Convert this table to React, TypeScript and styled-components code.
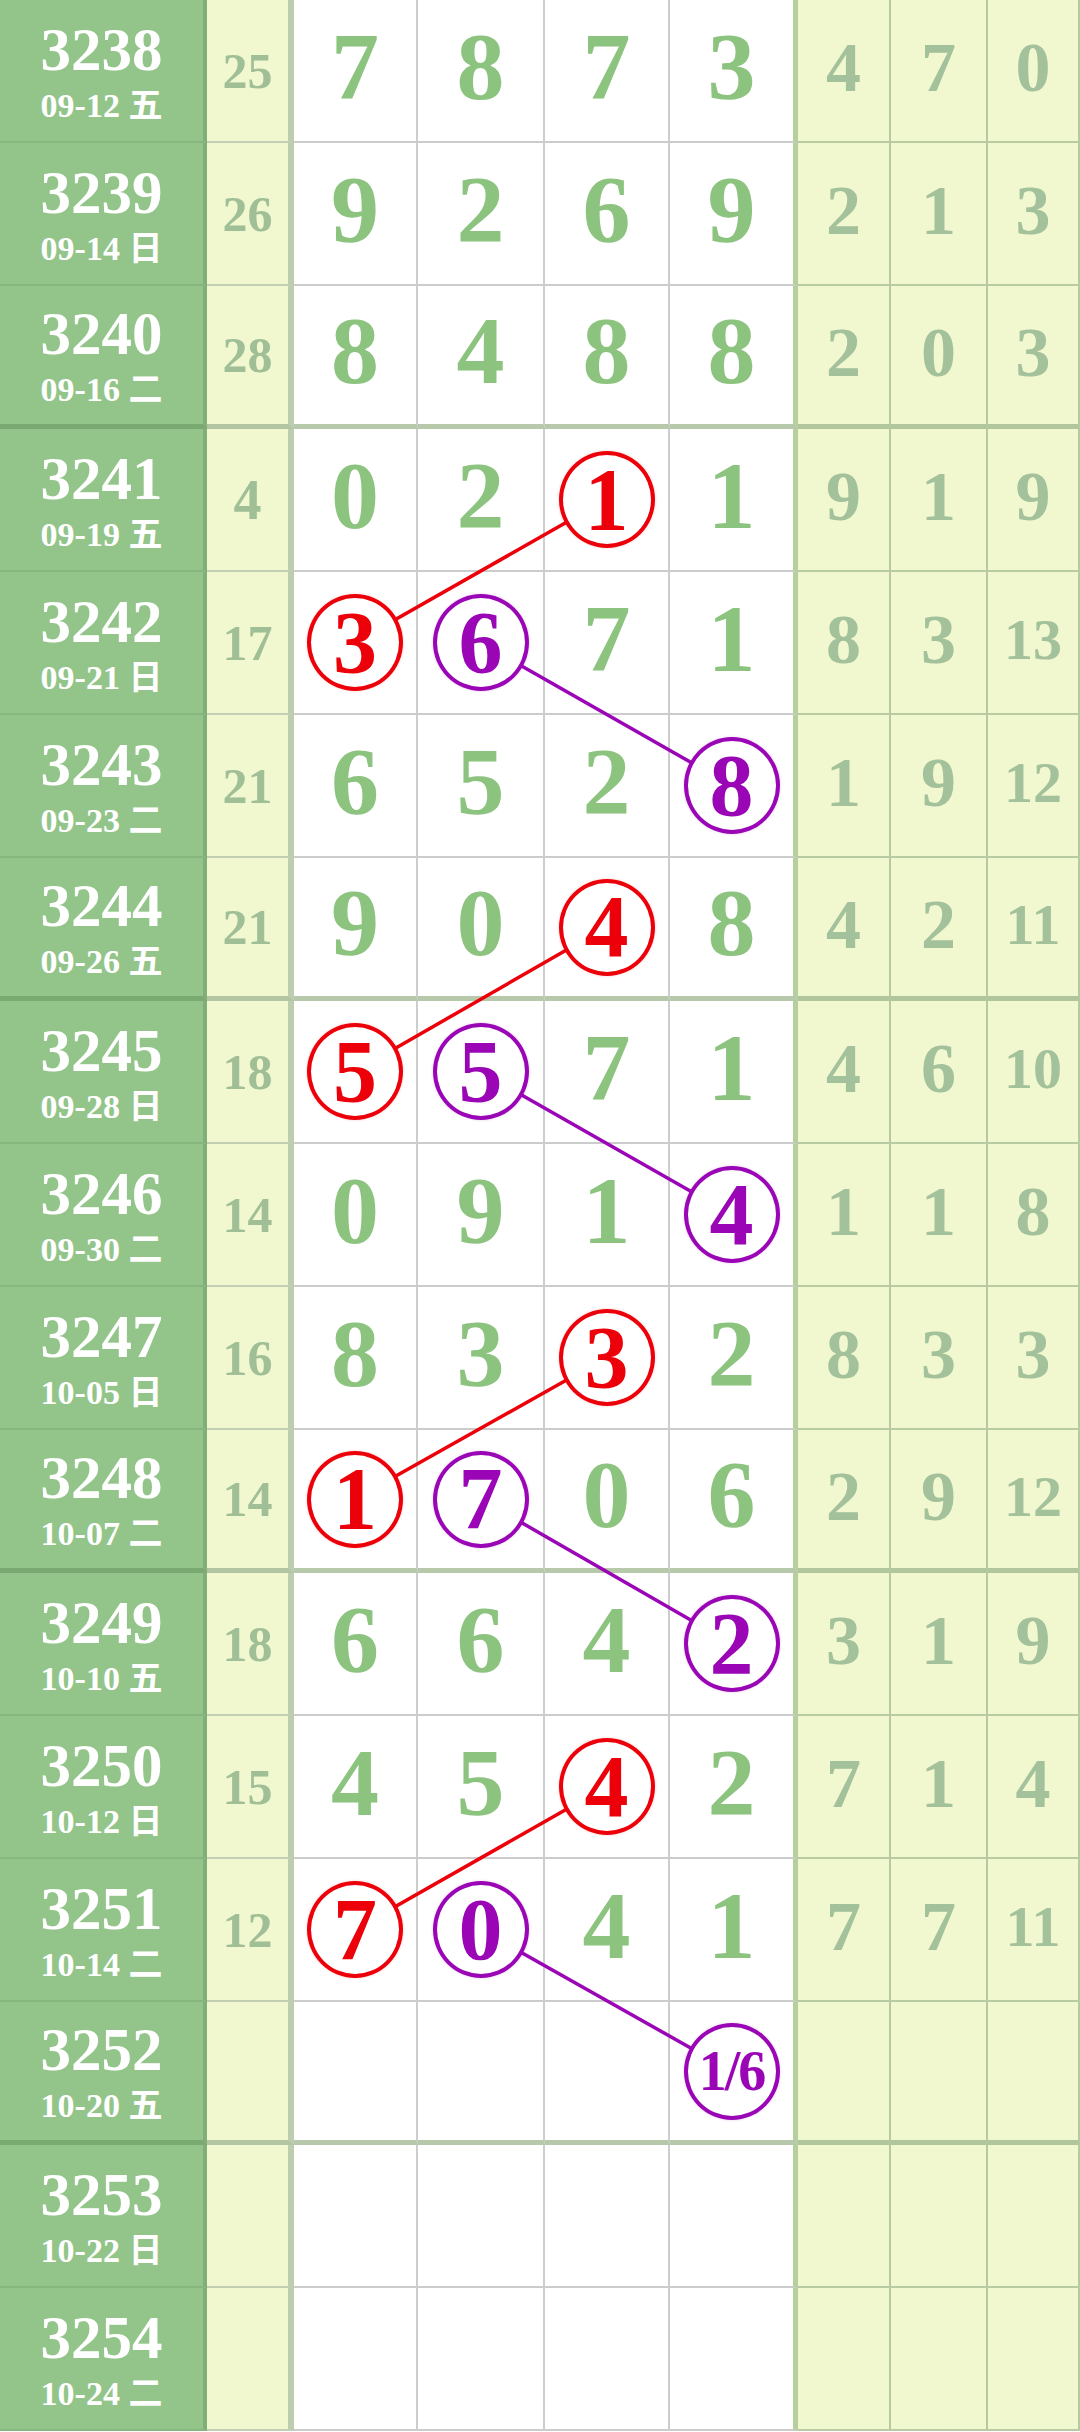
import React from "react";
import styled, { createGlobalStyle } from "styled-components";

const GlobalStyle = createGlobalStyle`
  html, body {
    margin: 0;
    padding: 0;
    background: #ffffff;
  }
  body {
    font-family: "Liberation Serif", "Noto Sans CJK SC", serif;
  }
`;

// column widths include each cell's right border
const COL_WIDTHS = [207, 87, 124, 127, 125, 128, 93, 97, 92];
const COL_BORDERS = [4, 6, 2, 2, 2, 5, 2, 2, 2];
const ROW_HEIGHT = 143;
const THIN = 2;
const THICK = 5;

const RED = "#ec0009";
const PURPLE = "#9a06b6";

interface IRow {
  id: number;
  date: string;
  day: string;
  sum?: number;
  main: string; // "r3" = red circle, "p6" = purple circle, "_" = empty
  side: (number | null)[];
}

const rows: IRow[] = [
  { id: 3238, date: "09-12", day: "五", sum: 25, main: "7 8 7 3", side: [4, 7, 0] },
  { id: 3239, date: "09-14", day: "日", sum: 26, main: "9 2 6 9", side: [2, 1, 3] },
  { id: 3240, date: "09-16", day: "二", sum: 28, main: "8 4 8 8", side: [2, 0, 3] },
  { id: 3241, date: "09-19", day: "五", sum: 4, main: "0 2 r1 1", side: [9, 1, 9] },
  { id: 3242, date: "09-21", day: "日", sum: 17, main: "r3 p6 7 1", side: [8, 3, 13] },
  { id: 3243, date: "09-23", day: "二", sum: 21, main: "6 5 2 p8", side: [1, 9, 12] },
  { id: 3244, date: "09-26", day: "五", sum: 21, main: "9 0 r4 8", side: [4, 2, 11] },
  { id: 3245, date: "09-28", day: "日", sum: 18, main: "r5 p5 7 1", side: [4, 6, 10] },
  { id: 3246, date: "09-30", day: "二", sum: 14, main: "0 9 1 p4", side: [1, 1, 8] },
  { id: 3247, date: "10-05", day: "日", sum: 16, main: "8 3 r3 2", side: [8, 3, 3] },
  { id: 3248, date: "10-07", day: "二", sum: 14, main: "r1 p7 0 6", side: [2, 9, 12] },
  { id: 3249, date: "10-10", day: "五", sum: 18, main: "6 6 4 p2", side: [3, 1, 9] },
  { id: 3250, date: "10-12", day: "日", sum: 15, main: "4 5 r4 2", side: [7, 1, 4] },
  { id: 3251, date: "10-14", day: "二", sum: 12, main: "r7 p0 4 1", side: [7, 7, 11] },
  { id: 3252, date: "10-20", day: "五", main: "_ _ _ p1/6", side: [null, null, null] },
  { id: 3253, date: "10-22", day: "日", main: "_ _ _ _", side: [null, null, null] },
  { id: 3254, date: "10-24", day: "二", main: "_ _ _ _", side: [null, null, null] },
];

const GROUP_ENDS = [2, 6, 10, 14];

const Sheet = styled.div`
  position: relative;
  width: 1080px;
`;

const RowLine = styled.div`
  display: grid;
  grid-template-columns: ${COL_WIDTHS.map((w) => `${w}px`).join(" ")};
  height: ${ROW_HEIGHT}px;
`;

const BaseCell = styled.div<{ $groupEnd: boolean }>`
  box-sizing: border-box;
  display: flex;
  align-items: center;
  justify-content: center;
  font-weight: bold;
  border-bottom: ${(p) => (p.$groupEnd ? THICK : THIN)}px solid;
`;

const IdCell = styled(BaseCell)`
  flex-direction: column;
  padding-top: 4px;
  background: #93c58a;
  color: #ffffff;
  border-right: 4px solid #80b078;
  border-bottom-color: ${(p) => (p.$groupEnd ? "#7aa972" : "#86b77e")};
`;

const IdNumber = styled.div`
  font-size: 61px;
  line-height: 60px;
`;

const IdDate = styled.div`
  font-size: 34px;
  line-height: 40px;
  margin-top: 6px;
`;

const SumCell = styled(BaseCell)<{ $small: boolean }>`
  background: #f1f7cf;
  color: #a0bf97;
  font-size: ${(p) => (p.$small ? 50 : 56)}px;
  border-right: 6px solid #bccdb0;
  border-bottom-color: ${(p) => (p.$groupEnd ? "#b4c5a4" : "#c3cfb2")};
`;

const MainCell = styled(BaseCell)<{ $last: boolean }>`
  background: #ffffff;
  color: #8cc47f;
  font-size: 96px;
  border-right: ${(p) => (p.$last ? "5px solid #b6cf9e" : "2px solid #cdcdcd")};
  border-bottom-color: ${(p) => (p.$groupEnd ? "#b8c8aa" : "#cccccc")};
`;

const SideCell = styled(BaseCell)<{ $small: boolean }>`
  background: #f1f7cf;
  color: #a3c19a;
  font-size: ${(p) => (p.$small ? 58 : 70)}px;
  border-right: 2px solid #b7ca9f;
  border-bottom-color: ${(p) => (p.$groupEnd ? "#b2c69d" : "#b9cba3")};
`;

const Digit = styled.span<{ $lift: number }>`
  line-height: 1;
  margin-bottom: ${(p) => p.$lift}px;
`;

const Ring = styled.div<{ $color: string; $small: boolean }>`
  position: relative;
  z-index: 2;
  box-sizing: border-box;
  width: 96px;
  height: 97px;
  border-radius: 50%;
  border: 4px solid ${(p) => p.$color};
  background: #ffffff;
  color: ${(p) => p.$color};
  display: flex;
  align-items: center;
  justify-content: center;
  font-size: ${(p) => (p.$small ? 56 : 88)}px;
  line-height: 1;
  letter-spacing: ${(p) => (p.$small ? "-2px" : "0")};
  box-shadow: 0 0 3px ${(p) => p.$color}33;
`;

const Links = styled.svg`
  position: absolute;
  top: 0;
  left: 0;
  z-index: 1;
  pointer-events: none;
`;

const colCenter = (c: number) => {
  let left = 0;
  for (let i = 0; i < c; i++) left += COL_WIDTHS[i];
  return left + (COL_WIDTHS[c] - COL_BORDERS[c]) / 2;
};

const rowCenter = (r: number) => {
  const b = GROUP_ENDS.includes(r) ? THICK : THIN;
  return r * ROW_HEIGHT + (ROW_HEIGHT - b) / 2;
};

const parseMain = (main: string) => main.split(" ");

const App: React.FC = () => {
  // connect same-coloured circles on consecutive rows
  const segments: { x1: number; y1: number; x2: number; y2: number; color: string }[] = [];
  rows.forEach((row, r) => {
    if (r === rows.length - 1) return;
    const cur = parseMain(row.main);
    const next = parseMain(rows[r + 1].main);
    ["r", "p"].forEach((tag) => {
      const a = cur.findIndex((t) => t.startsWith(tag));
      const b = next.findIndex((t) => t.startsWith(tag));
      if (a < 0 || b < 0) return;
      segments.push({
        x1: colCenter(a + 2),
        y1: rowCenter(r),
        x2: colCenter(b + 2),
        y2: rowCenter(r + 1),
        color: tag === "r" ? RED : PURPLE,
      });
    });
  });

  const total = rows.length * ROW_HEIGHT;

  return (
    <>
      <GlobalStyle />
      <Sheet>
        {rows.map((row, r) => {
          const groupEnd = GROUP_ENDS.includes(r);
          const tokens = parseMain(row.main);
          return (
            <RowLine key={row.id}>
              <IdCell $groupEnd={groupEnd}>
                <IdNumber>{row.id}</IdNumber>
                <IdDate>
                  {row.date} {row.day}
                </IdDate>
              </IdCell>
              <SumCell $groupEnd={groupEnd} $small={(row.sum ?? 0) >= 10}>
                {row.sum !== undefined && <Digit $lift={0}>{row.sum}</Digit>}
              </SumCell>
              {tokens.map((t, i) => (
                <MainCell key={i} $groupEnd={groupEnd} $last={i === 3}>
                  {t === "_" ? null : t.startsWith("r") || t.startsWith("p") ? (
                    <Ring
                      $color={t.startsWith("r") ? RED : PURPLE}
                      $small={t.length > 2}
                    >
                      {t.slice(1)}
                    </Ring>
                  ) : (
                    <Digit $lift={8}>{t}</Digit>
                  )}
                </MainCell>
              ))}
              {row.side.map((v, i) => (
                <SideCell key={i} $groupEnd={groupEnd} $small={(v ?? 0) >= 10}>
                  {v !== null && <Digit $lift={5}>{v}</Digit>}
                </SideCell>
              ))}
            </RowLine>
          );
        })}
        <Links width={1080} height={total} viewBox={`0 0 1080 ${total}`}>
          {segments.map((s, i) => (
            <line
              key={i}
              x1={s.x1}
              y1={s.y1}
              x2={s.x2}
              y2={s.y2}
              stroke={s.color}
              strokeWidth={3.5}
            />
          ))}
        </Links>
      </Sheet>
    </>
  );
};

export default App;
